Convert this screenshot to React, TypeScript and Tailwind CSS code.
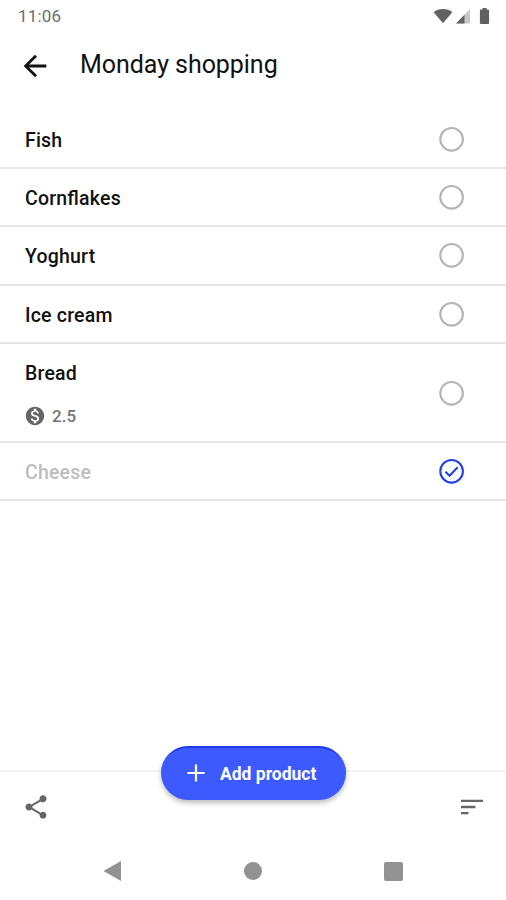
import React, { useState } from "react";
import { MdArrowBack, MdShare, MdMonetizationOn } from "react-icons/md";
import clsx from "clsx";

type Product = {
  name: string;
  price?: string;
  done: boolean;
};

const initialProducts: Product[] = [
  { name: "Fish", done: false },
  { name: "Cornflakes", done: false },
  { name: "Yoghurt", done: false },
  { name: "Ice cream", done: false },
  { name: "Bread", price: "2.5", done: false },
  { name: "Cheese", done: true },
];

function StatusBar() {
  return (
    <div className="flex h-8 items-center justify-between pb-px pl-[18px] pr-[16px] text-[#6e6e6e]">
      <span className="pt-px text-[17px] leading-none tracking-[0.2px]">11:06</span>
      <div className="flex items-center text-[#616161]">
        {/* Wifi */}
        <svg width="20" height="16" viewBox="0 0 20 16" fill="currentColor">
          <path d="M.7 4.2C3 2.2 6.200 1 10 1s7 1.200 9.300 3.200L10 15.200z" />
        </svg>
        {/* Mobile signal */}
        <svg className="ml-[2px]" width="16" height="16" viewBox="0 0 16 16" fill="currentColor">
          <path d="M1 15.500 15 1v14.500z" opacity=".35" />
          <path d="M1 15.500 9.500 6.700v8.800z" />
        </svg>
        {/* Battery */}
        <svg className="ml-[8px]" width="11" height="16" viewBox="0 0 11 16" fill="currentColor">
          <path d="M3.500 0h4v1.500H9.200a.9.900 0 0 1 .9.900v12.700a.9.900 0 0 1-.9.900H1.800a.9.900 0 0 1-.9-.9V2.400a.9.900 0 0 1 .9-.9h1.700z" />
        </svg>
      </div>
    </div>
  );
}

function CheckMark({ done }: { done: boolean }) {
  return (
    <svg
      className={done ? "text-[#2540e8]" : "text-[#b5b5b5]"}
      width="26"
      height="26"
      viewBox="0 0 26 26"
      fill="none"
      stroke="currentColor"
      strokeWidth="2.1"
    >
      <circle cx="12.600" cy="13.300" r="11.300" />
      {done && <path d="m6.500 13.700 4 4 8.200-8.400" />}
    </svg>
  );
}

export default function App() {
  const [products, setProducts] = useState<Product[]>(initialProducts);

  const toggle = (name: string) => {
    setProducts(
      products.map((p) => (p.name === name ? { ...p, done: !p.done } : p))
    );
  };

  return (
    <div className="flex h-[900px] w-[506px] flex-col overflow-hidden bg-white font-[Roboto,sans-serif] text-[#111]">
      <StatusBar />

      <header className="flex h-[66px] items-center pl-[18px]">
        <button aria-label="Back" className="pt-px">
          <MdArrowBack size={34} />
        </button>
        <h1 className="ml-7 pb-px text-[25px] leading-none tracking-[-0.05px]">Monday shopping</h1>
      </header>

      <ul className="mt-[13px]">
        {products.map((product) => (
          <li
            key={product.name}
            className={clsx(
              "flex items-center justify-between border-b-2 border-[#e6e6e6] pl-[25px] pr-[41px]",
              product.price ? "h-[99.500px]" : "h-[58.200px]"
            )}
          >
            <div className="pt-[4px]">
              <p
                className={clsx(
                  "text-[19.500px] font-medium leading-6 tracking-[0.2px] [font-feature-settings:'liga']",
                  product.done && "text-[#bdbdbd]"
                )}
              >
                {product.name}
              </p>
              {product.price && (
                <p className="mt-[18px] flex items-center text-[17px] font-medium leading-6 text-[#757575]">
                  <MdMonetizationOn className="-ml-[1px] mr-[6px] text-[#666]" size={22} />
                  {product.price}
                </p>
              )}
            </div>
            <button onClick={() => toggle(product.name)} aria-label={product.name}>
              <CheckMark done={product.done} />
            </button>
          </li>
        ))}
      </ul>

      <footer className="relative mt-auto h-[130px] border-t-2 border-[#f4f4f4]">
        <button className="absolute -top-[26px] left-[161px] flex h-[54px] w-[185px] items-center rounded-full border-t-2 border-[#1f3ae6] bg-[#3d5afe] pb-[2px] pl-[26px] text-[17.500px] font-bold text-white shadow-[0_3px_5px_rgba(0,0,0,0.25)]">
          <svg width="18" height="18" viewBox="0 0 18 18" stroke="currentColor" strokeWidth="2.200">
            <path d="M9 .5v17M.5 9h17" />
          </svg>
          <span className="ml-[15px] pt-[3px]">Add product</span>
        </button>
        <div className="flex h-[70px] items-center justify-between pl-[22px] pr-[22px] text-[#666]">
          <MdShare size={28} />
          <svg width="24" height="16" viewBox="0 0 24 16" fill="currentColor">
            <path d="M1 .7h22v2.400H1zM1 6.800h14.500v2.400H1zM1 12.900h7.500v2.400H1z" />
          </svg>
        </div>
        <nav className="flex h-[58px] items-center justify-between pl-[102px] pr-[103px] text-[#929292]">
          <svg width="20" height="22" viewBox="0 0 20 22" fill="currentColor">
            <path d="M19 1v20L1.500 11z" />
          </svg>
          <span className="size-[18px] rounded-full bg-current" />
          <span className="size-[19px] rounded-[2px] bg-current" />
        </nav>
      </footer>
    </div>
  );
}
